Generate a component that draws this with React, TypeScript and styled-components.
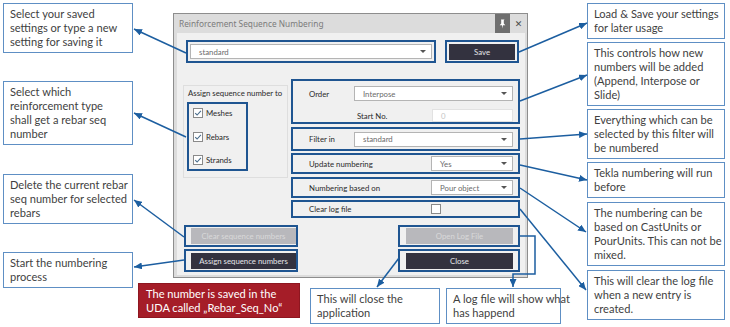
import React from "react";
import styled, { createGlobalStyle } from "styled-components";

const Global = createGlobalStyle`
  html, body { margin: 0; padding: 0; background: #ffffff; }
  body { width: 730px; height: 327px; overflow: hidden; }
`;

const BLUE = "#1f5591";
const NOTE_BORDER = "#5e8fc4";
const ARROW = "#1c5ea0";

const Canvas = styled.div`
  position: relative;
  width: 730px;
  height: 327px;
  display: grid;
  grid-template-columns: 135px 452px 143px;
  background: #ffffff;
  font-family: Lato, "Liberation Sans", sans-serif;
`;

const NoteColumn = styled.div<{ $pl: number }>`
  display: flex;
  flex-direction: column;
  align-items: flex-start;
  padding-left: ${(p) => p.$pl}px;
`;

const Note = styled.div<{ $w: number; $mt: number; $ml?: number }>`
  box-sizing: border-box;
  width: ${(p) => p.$w}px;
  margin-top: ${(p) => p.$mt}px;
  margin-left: ${(p) => p.$ml ?? 0}px;
  border: 1.5px solid ${NOTE_BORDER};
  background: #ffffff;
  padding: 3px 6px;
  font-size: 11.1px;
  line-height: 14px;
  color: #3f3f3f;
  white-space: nowrap;
`;

const RedNote = styled.div`
  box-sizing: border-box;
  width: 162px;
  height: 35px;
  margin-left: 3px;
  background: #a51d28;
  border: 1px solid #8e1620;
  padding: 3px 7px;
  font-size: 11.1px;
  line-height: 14px;
  color: #ffffff;
  white-space: nowrap;
`;

const Center = styled.div`
  display: flex;
  flex-direction: column;
`;

const BottomNotes = styled.div`
  display: flex;
  align-items: flex-start;
  margin-top: 5px;
`;

/* ---------- Dialog ---------- */

const Dialog = styled.div`
  box-sizing: border-box;
  width: 355px;
  height: 265px;
  margin-top: 13px;
  margin-left: 38px;
  border: 1px solid #8d8d8d;
  background: #dcdcdc;
  display: flex;
  flex-direction: column;
  font-family: Lato, "Noto Sans", sans-serif;
`;

const TitleBar = styled.div`
  height: 19px;
  display: flex;
  align-items: center;
  padding-left: 5px;
  color: #7b7b7b;
  font-family: "Noto Sans", "Open Sans", sans-serif;
  font-size: 8.3px;
`;

const TitleText = styled.div`
  flex: 1;
`;

const PinButton = styled.div`
  width: 15px;
  height: 19px;
  background: #6f6f6f;
  display: flex;
  align-items: center;
  justify-content: center;
`;

const CloseX = styled.div`
  width: 17px;
  height: 19px;
  display: flex;
  align-items: center;
  justify-content: center;
  color: #4a4a4a;
  font-family: "DejaVu Sans", sans-serif;
  font-weight: bold;
  font-size: 9px;
`;

const Body = styled.div`
  flex: 1;
  margin: 0 2px 2px 3px;
  background: #f0f0f0;
  display: flex;
  flex-direction: column;
  padding: 7px 5px 0 6px;
`;

const Row = styled.div<{ $mt?: number; $ml?: number; $gap?: number }>`
  display: flex;
  align-items: flex-start;
  margin-top: ${(p) => p.$mt ?? 0}px;
  margin-left: ${(p) => p.$ml ?? 0}px;
  gap: ${(p) => p.$gap ?? 0}px;
`;

const Highlight = styled.div<{ $w: number; $h: number; $pad?: string; $dir?: string; $justify?: string }>`
  box-sizing: border-box;
  width: ${(p) => p.$w}px;
  height: ${(p) => p.$h}px;
  border: 2px solid ${BLUE};
  padding: ${(p) => p.$pad ?? "0"};
  display: flex;
  flex-direction: ${(p) => p.$dir ?? "row"};
  align-items: ${(p) => (p.$dir === "column" ? "stretch" : "center")};
  justify-content: ${(p) => p.$justify ?? "flex-start"};
`;

const Combo = styled.div<{ $w: number }>`
  box-sizing: border-box;
  width: ${(p) => p.$w}px;
  height: 15px;
  background: #ffffff;
  border: 1px solid #b4b4b4;
  display: flex;
  align-items: center;
  justify-content: space-between;
  padding: 0 5px 0 8px;
  font-size: 7.8px;
  color: #6b6b6b;
`;

const Caret = styled.span`
  width: 0;
  height: 0;
  border-left: 3px solid transparent;
  border-right: 3px solid transparent;
  border-top: 3.5px solid #555555;
`;

const TextInput = styled.div<{ $w: number }>`
  box-sizing: border-box;
  width: ${(p) => p.$w}px;
  height: 13px;
  background: #ffffff;
  border: 1px solid #e2e2e2;
  padding-left: 8px;
  display: flex;
  align-items: center;
  font-size: 7.8px;
  color: #c4c4c4;
`;

const Button = styled.div<{ $w: number; $disabled?: boolean }>`
  box-sizing: border-box;
  width: ${(p) => p.$w}px;
  height: 16px;
  background: ${(p) => (p.$disabled ? "#b8b8bc" : "#33323f")};
  color: ${(p) => (p.$disabled ? "#d8d8da" : "#e4e4e8")};
  display: flex;
  align-items: center;
  justify-content: center;
  font-size: 7.8px;
`;

const MainArea = styled.div`
  display: flex;
  align-items: flex-start;
  gap: 3px;
  margin-top: 16px;
`;

const GroupBox = styled.div`
  box-sizing: border-box;
  width: 105px;
  height: 93px;
  margin-top: 6px;
  border: 1px solid #dedede;
  padding: 2px 0 0 3px;
  display: flex;
  flex-direction: column;
`;

const GroupLabel = styled.div`
  font-size: 7.8px;
  color: #2a2a2a;
  height: 11px;
  line-height: 11px;
  margin-bottom: 3px;
  margin-left: 1px;
  white-space: nowrap;
`;

const CheckRow = styled.div<{ $mt?: number }>`
  height: 18px;
  margin-top: ${(p) => p.$mt ?? 0}px;
  display: flex;
  align-items: center;
  gap: 3px;
  font-size: 7.8px;
  color: #2a2a2a;
`;

const Check = styled.div`
  box-sizing: border-box;
  width: 10px;
  height: 10px;
  background: #ffffff;
  border: 1px solid #8a8a8a;
  display: flex;
  align-items: center;
  justify-content: center;
`;

const RightCol = styled.div`
  display: flex;
  flex-direction: column;
  width: 229px;
`;

const Setting = styled.div<{ $h: number; $mt: number }>`
  box-sizing: border-box;
  height: ${(p) => p.$h}px;
  margin-top: ${(p) => p.$mt}px;
  border: 2px solid ${BLUE};
  padding: 0 5px 0 16px;
  display: flex;
  align-items: center;
  justify-content: space-between;
  font-size: 7.8px;
  color: #2a2a2a;
`;

const CheckSlot = styled.div`
  width: 82px;
  display: flex;
`;

const OrderBox = styled.div`
  box-sizing: border-box;
  height: 45px;
  border: 2px solid ${BLUE};
  padding: 5px 5px 0 16px;
  display: flex;
  flex-direction: column;
  gap: 8px;
  font-size: 7.8px;
  color: #2a2a2a;
`;

const OrderLine = styled.div<{ $pl?: number }>`
  display: flex;
  align-items: center;
  justify-content: space-between;
  padding-left: ${(p) => p.$pl ?? 0}px;
`;

const BottomArea = styled.div`
  display: flex;
  justify-content: space-between;
  margin-top: 7px;
  margin-left: 1px;
`;

const ButtonStack = styled.div`
  display: flex;
  flex-direction: column;
  gap: 2px;
`;

const Overlay = styled.svg`
  position: absolute;
  left: 0;
  top: 0;
  pointer-events: none;
`;

const CheckMark = () => (
  <svg width="8" height="8" viewBox="0 0 8 8">
    <path d="M1.2 4.2 L3.1 6 L6.9 1.8" fill="none" stroke="#4a6d8c" strokeWidth="1.1" />
  </svg>
);

const PinIcon = () => (
  <svg width="7" height="10" viewBox="0 0 7 10">
    <path d="M2 0.5 H5.5 L4.8 1.6 V4.6 L6.3 6.2 H4 L3.5 9.6 L3 6.2 H0.7 L2.2 4.6 V1.6 Z" fill="#ffffff" />
  </svg>
);

type Seg = [number, number, number, number];
const arrows: Seg[] = [
  [186, 53, 134, 29],
  [186, 137, 134, 113],
  [184, 237, 134, 200],
  [184, 260, 134, 267],
  [519, 52, 587, 23],
  [520, 101, 587, 75],
  [520, 139, 587, 134],
  [520, 165, 587, 180],
  [520, 188, 586, 232],
  [520, 209, 586, 290],
  [399, 258, 377, 287],
];

export default function App() {
  return (
    <>
      <Global />
      <Canvas>
        <NoteColumn $pl={3}>
          <Note $w={130} $mt={3}>
            Select your saved
            <br />
            settings or type a new
            <br />
            setting for saving it
          </Note>
          <Note $w={130} $mt={28}>
            Select which
            <br />
            reinforcement type
            <br />
            shall get a rebar seq
            <br />
            number
          </Note>
          <Note $w={130} $mt={29}>
            Delete the current rebar
            <br />
            seq number for selected
            <br />
            rebars
          </Note>
          <Note $w={130} $mt={28}>
            Start the numbering
            <br />
            process
          </Note>
        </NoteColumn>

        <Center>
          <Dialog>
            <TitleBar>
              <TitleText>Reinforcement Sequence Numbering</TitleText>
              <PinButton>
                <PinIcon />
              </PinButton>
              <CloseX>✕</CloseX>
            </TitleBar>
            <Body>
              <Row $ml={3} $gap={9}>
                <Highlight $w={250} $h={23} $pad="0 2px">
                  <Combo $w={242}>
                    standard
                    <Caret />
                  </Combo>
                </Highlight>
                <Highlight $w={74} $h={23} $pad="0 2px" $justify="center">
                  <Button $w={67}>Save</Button>
                </Highlight>
              </Row>

              <MainArea>
                <GroupBox>
                  <GroupLabel>Assign sequence number to</GroupLabel>
                  <Highlight $w={61} $h={69} $pad="0 0 0 4px" $dir="column">
                    <CheckRow>
                      <Check>
                        <CheckMark />
                      </Check>
                      Meshes
                    </CheckRow>
                    <CheckRow $mt={5.5}>
                      <Check>
                        <CheckMark />
                      </Check>
                      Rebars
                    </CheckRow>
                    <CheckRow $mt={5.5}>
                      <Check>
                        <CheckMark />
                      </Check>
                      Strands
                    </CheckRow>
                  </Highlight>
                </GroupBox>

                <RightCol>
                  <OrderBox>
                    <OrderLine>
                      Order
                      <Combo $w={159}>
                        Interpose
                        <Caret />
                      </Combo>
                    </OrderLine>
                    <OrderLine $pl={48}>
                      Start No.
                      <TextInput $w={81}>0</TextInput>
                    </OrderLine>
                  </OrderBox>
                  <Setting $h={24} $mt={3}>
                    Filter in
                    <Combo $w={159}>
                      standard
                      <Caret />
                    </Combo>
                  </Setting>
                  <Setting $h={21} $mt={2}>
                    Update numbering
                    <Combo $w={82}>
                      Yes
                      <Caret />
                    </Combo>
                  </Setting>
                  <Setting $h={21} $mt={3}>
                    Numbering based on
                    <Combo $w={82}>
                      Pour object
                      <Caret />
                    </Combo>
                  </Setting>
                  <Setting $h={18} $mt={2}>
                    Clear log file
                    <CheckSlot>
                      <Check />
                    </CheckSlot>
                  </Setting>
                </RightCol>
              </MainArea>

              <BottomArea>
                <ButtonStack>
                  <Highlight $w={114} $h={22} $pad="0 0 0 5px">
                    <Button $w={106} $disabled>
                      Clear sequence numbers
                    </Button>
                  </Highlight>
                  <Highlight $w={114} $h={23} $pad="0 0 0 5px">
                    <Button $w={106}>Assign sequence numbers</Button>
                  </Highlight>
                </ButtonStack>
                <ButtonStack>
                  <Highlight $w={122} $h={22} $pad="0 0 0 6px">
                    <Button $w={107} $disabled>
                      Open Log File
                    </Button>
                  </Highlight>
                  <Highlight $w={122} $h={23} $pad="0 0 0 6px">
                    <Button $w={107}>Close</Button>
                  </Highlight>
                </ButtonStack>
              </BottomArea>
            </Body>
          </Dialog>

          <BottomNotes>
            <RedNote>
              The number is saved in the
              <br />
              UDA called „Rebar_Seq_No“
            </RedNote>
            <Note $w={130} $mt={5} $ml={10}>
              This will close the
              <br />
              application
            </Note>
            <Note $w={115} $mt={5} $ml={6}>
              A log file will show what
              <br />
              has happend
            </Note>
          </BottomNotes>
        </Center>

        <NoteColumn $pl={0}>
          <Note $w={138} $mt={3}>
            Load &amp; Save your settings
            <br />
            for later usage
          </Note>
          <Note $w={138} $mt={3}>
            This controls how new
            <br />
            numbers will be added
            <br />
            (Append, Interpose or
            <br />
            Slide)
          </Note>
          <Note $w={138} $mt={3}>
            Everything which can be
            <br />
            selected by this filter will
            <br />
            be numbered
          </Note>
          <Note $w={138} $mt={3}>
            Tekla numbering will run
            <br />
            before
          </Note>
          <Note $w={138} $mt={4}>
            The numbering can be
            <br />
            based on CastUnits or
            <br />
            PourUnits. This can not be
            <br />
            mixed.
          </Note>
          <Note $w={138} $mt={4}>
            This will clear the log file
            <br />
            when a new entry is
            <br />
            created.
          </Note>
        </NoteColumn>

        <Overlay width={730} height={327} viewBox="0 0 730 327">
          <defs>
            <marker
              id="ah"
              markerWidth="8"
              markerHeight="7"
              refX="8"
              refY="3.5"
              orient="auto"
              markerUnits="userSpaceOnUse"
            >
              <path d="M0,0 L8,3.5 L0,7 Z" fill={ARROW} />
            </marker>
          </defs>
          {arrows.map(([x1, y1, x2, y2], i) => (
            <line
              key={i}
              x1={x1}
              y1={y1}
              x2={x2}
              y2={y2}
              stroke={ARROW}
              strokeWidth={1.5}
              markerEnd="url(#ah)"
            />
          ))}
          <polyline
            points="520,236 535,236 535,274 513,274 513,287"
            fill="none"
            stroke={ARROW}
            strokeWidth={1.5}
            markerEnd="url(#ah)"
          />
        </Overlay>
      </Canvas>
    </>
  );
}
